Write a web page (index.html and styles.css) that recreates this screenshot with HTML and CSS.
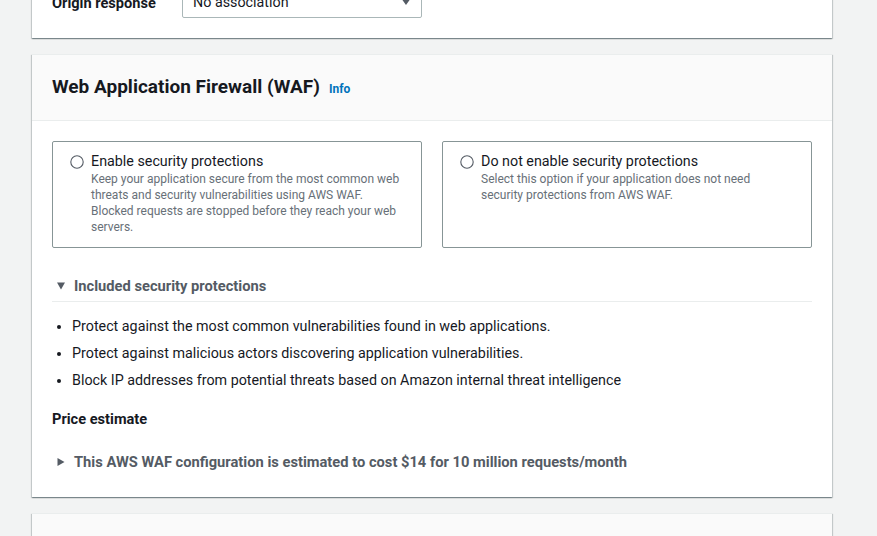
FILE: index.html
```html
<!DOCTYPE html>
<html>
<head>
<meta charset="utf-8">
<link rel="stylesheet" href="styles.css">
</head>
<body>
<div class="page">
  <div class="card card-top">
    <div class="field-row">
      <div class="field-label">Origin response</div>
      <div class="select">
        <span>No association</span>
        <svg class="caret" width="10" height="8" viewBox="0 0 10 8"><path d="M0 0 L10 0 L5 7 Z" fill="#545b64"/></svg>
      </div>
    </div>
  </div>

  <div class="card">
    <div class="card-header">
      <h2 class="title">Web Application Firewall (WAF)</h2>
      <a class="info">Info</a>
    </div>
    <div class="card-body">
      <div class="tiles">
        <div class="tile">
          <svg class="radio" width="14" height="14" viewBox="0 0 14 14"><circle cx="7" cy="7" r="6.2" fill="#fff" stroke="#545b64" stroke-width="1.1"/></svg>
          <div class="tile-text">
            <div class="tile-title">Enable security protections</div>
            <div class="tile-desc">Keep your application secure from the most common web threats and security vulnerabilities using AWS WAF. Blocked requests are stopped before they reach your web servers.</div>
          </div>
        </div>
        <div class="tile">
          <svg class="radio" width="14" height="14" viewBox="0 0 14 14"><circle cx="7" cy="7" r="6.2" fill="#fff" stroke="#545b64" stroke-width="1.1"/></svg>
          <div class="tile-text">
            <div class="tile-title">Do not enable security protections</div>
            <div class="tile-desc">Select this option if your application does not need security protections from AWS WAF.</div>
          </div>
        </div>
      </div>

      <div class="expander">
        <svg class="tri" width="10" height="10" viewBox="0 0 10 10"><path d="M1 1.5 L9 1.5 L5 8.5 Z" fill="#545b64"/></svg>
        <span>Included security protections</span>
      </div>
      <ul class="bullets">
        <li>Protect against the most common vulnerabilities found in web applications.</li>
        <li>Protect against malicious actors discovering application vulnerabilities.</li>
        <li>Block IP addresses from potential threats based on Amazon internal threat intelligence</li>
      </ul>
      <div class="price-label">Price estimate</div>
      <div class="expander collapsed">
        <svg class="tri" width="10" height="10" viewBox="0 0 10 10"><path d="M1.5 1 L8.5 5 L1.5 9 Z" fill="#545b64"/></svg>
        <span>This AWS WAF configuration is estimated to cost $14 for 10 million requests/month</span>
      </div>
    </div>
  </div>

  <div class="card card-next">
    <div class="card-header empty"></div>
  </div>
</div>
</body>
</html>
```

FILE: styles.css
```css
html, body {
  margin: 0;
  padding: 0;
  background: #f2f3f3;
  font-family: Roboto, "Liberation Sans", sans-serif;
  color: #16191f;
  overflow: hidden;
}
.page {
  width: 800px;
  padding-left: 32px;
  display: flex;
  flex-direction: column;
  gap: 16px;
}
.card {
  background: #fff;
  border-top: 1px solid #eaeded;
  box-shadow: 0 1px 1px 0 rgba(0, 28, 36, 0.3), 1px 1px 1px 0 rgba(0, 28, 36, 0.15), -1px 1px 1px 0 rgba(0, 28, 36, 0.15);
}
.card-top {
  margin-top: -38px;
  padding: 25px 20px 20px;
}
.field-row {
  display: flex;
  align-items: center;
}
.field-label {
  width: 130px;
  font-size: 14.6px;
  font-weight: 700;
  line-height: 20px;
}
.select {
  width: 218px;
  height: 30px;
  border: 1px solid #aab7b8;
  border-radius: 2px;
  display: flex;
  align-items: center;
  justify-content: space-between;
  padding: 0 10px;
  font-size: 14.3px;
  margin-top: -2px;
}
.card-header {
  background: #fafafa;
  border-bottom: 1px solid #eaeded;
  padding: 21px 20px 22px;
  display: flex;
  align-items: baseline;
  gap: 9px;
}
.card-header.empty {
  height: 40px;
}
.title {
  margin: 0;
  font-size: 19px;
  line-height: 22px;
  font-weight: 700;
}
.info {
  font-size: 12px;
  font-weight: 700;
  color: #0073bb;
}
.card-body {
  padding: 20px 20px 25px;
}
.tiles {
  display: grid;
  grid-template-columns: 1fr 1fr;
  gap: 20px;
}
.tile {
  border: 1px solid #879596;
  border-radius: 2px;
  padding: 9px 20px 12px 17px;
  display: flex;
  gap: 7px;
  align-items: flex-start;
}
.radio {
  flex: none;
  margin-top: 4px;
}
.tile-title {
  font-size: 14.3px;
  line-height: 20px;
}
.tile-desc {
  font-size: 12px;
  line-height: 16px;
  color: #687078;
}
.expander {
  display: flex;
  align-items: center;
  gap: 8px;
  font-size: 14.7px;
  line-height: 20px;
  font-weight: 700;
  color: #545b64;
  padding: 0 0 5px 4px;
}
.expander:not(.collapsed) {
  margin-top: 28px;
  border-bottom: 1px solid #eaeded;
}
.expander.collapsed {
  margin-top: 23px;
  padding-bottom: 0;
}
.tri {
  flex: none;
}
.bullets {
  margin: 14px 0 0;
  padding: 0 0 0 20px;
  font-size: 14.3px;
  line-height: 20px;
}
.bullets li {
  margin-bottom: 7px;
}
.price-label {
  margin-top: 19px;
  font-size: 14.6px;
  line-height: 20px;
  font-weight: 700;
}
```
